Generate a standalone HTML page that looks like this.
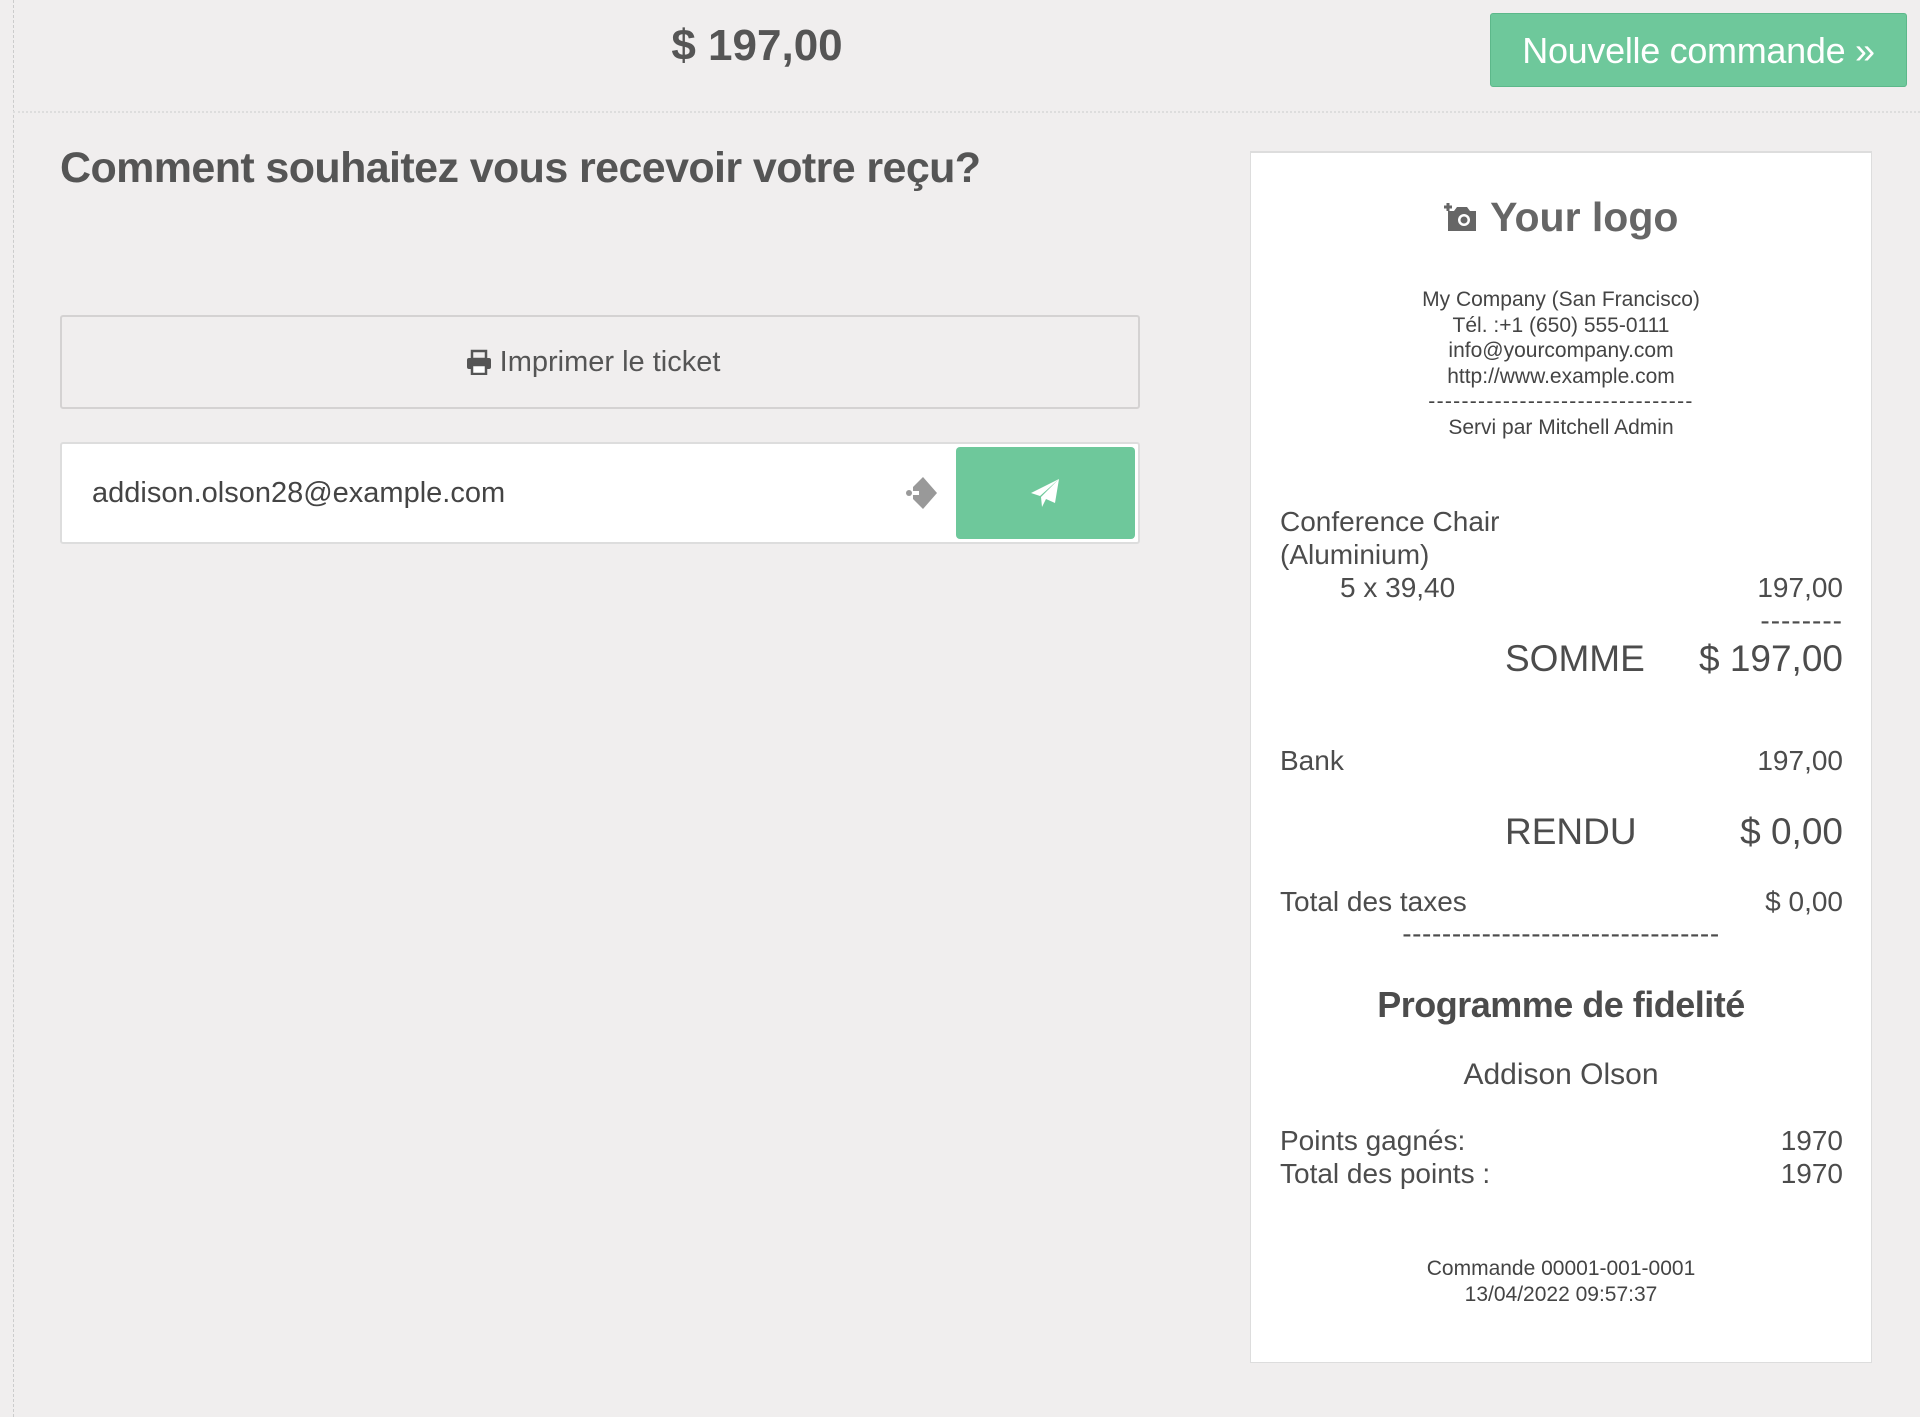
<!DOCTYPE html>
<html><head><meta charset="utf-8"><style>
*{margin:0;padding:0;box-sizing:border-box}
body{width:1920px;height:1417px;background:#f0eeee;font-family:"Liberation Sans",sans-serif;color:#4c4c4c;position:relative;overflow:hidden}
.a{position:absolute;white-space:nowrap}
.r{text-align:right}
.c{text-align:center}
</style></head><body>
<div class="a" style="left:13px;top:0;height:1417px;border-left:1px dashed #ccc"></div>
<div class="a" style="left:13px;top:111px;width:1907px;border-top:2px dotted #ddd"></div>
<div class="a c" style="left:557px;width:400px;top:20px;font-size:44px;line-height:52px;font-weight:bold;color:#555">$ 197,00</div>
<div class="a c" style="left:1490px;top:13px;width:417px;height:74px;background:#6ec89b;border:1px solid #5cb88a;border-radius:3px;color:#fff;font-size:36px;line-height:74px;letter-spacing:-0.3px">Nouvelle commande »</div>
<div class="a" style="left:60px;top:144px;font-size:43px;line-height:48px;font-weight:bold;color:#555;letter-spacing:-0.6px">Comment souhaitez vous recevoir votre reçu?</div>
<div class="a c" style="left:60px;top:315px;width:1080px;height:94px;border:2px solid #d4d2d2;border-radius:3px;background:#f0eeee;font-size:29px;line-height:90px;color:#555;padding-right:14px"><svg width="26" height="26" viewBox="0 0 26 26" style="vertical-align:-4px"><rect x="6" y="2" width="14" height="8" fill="none" stroke="#555" stroke-width="2.5"/><rect x="1" y="9" width="24" height="11" rx="2" fill="#555"/><rect x="6" y="16" width="14" height="9" fill="#fff" stroke="#555" stroke-width="2.5"/></svg> Imprimer le ticket</div>
<div class="a" style="left:60px;top:442px;width:1080px;height:102px;border:2px solid #ddd;border-radius:3px;background:#fff"></div>
<div class="a" style="left:92px;top:475px;font-size:29px;line-height:36px;color:#444">addison.olson28@example.com</div>
<svg class="a" style="left:903px;top:475px" width="36" height="36" viewBox="0 0 36 36"><path d="M20 2 L34 18 L20 34 L10 24 L10 20 L16 20 L16 16 L10 16 L10 12 Z" fill="#999"/><circle cx="6" cy="18" r="3" fill="#999"/></svg>
<div class="a" style="left:956px;top:447px;width:179px;height:92px;background:#6ec89b;border-radius:4px"></div>
<svg class="a" style="left:1029px;top:477px" width="32" height="32" viewBox="0 0 32 32"><path d="M30 2 L2 16 L11 19 Z M30 2 L12 20 L13 30 L17 22 L26 26 Z" fill="#fff"/></svg>
<div class="a" style="left:1250px;top:151px;width:622px;height:1212px;background:#fff;border:1px solid #ddd;border-top:2px solid #ddd"></div>
<div class="a c" style="left:1250px;width:622px;top:192px;font-size:41px;line-height:50px;font-weight:bold;color:#666"><svg width="36" height="32" viewBox="0 0 36 32" style="vertical-align:-2px"><path d="M4 2v8M0 6h8" stroke="#666" stroke-width="3"/><path d="M4 10h6l3-4h10l3 4h6v20H4Z" fill="#666"/><circle cx="20" cy="19" r="6" fill="#fff"/><circle cx="20" cy="19" r="3.5" fill="#666"/></svg> Your logo</div>
<div class="a c" style="left:1250px;width:622px;top:287px;font-size:21px;line-height:25.5px;color:#444">My Company (San Francisco)<br>Tél. :+1 (650) 555-0111<br>info@yourcompany.com<br>http://www.example.com<br><span style="letter-spacing:1.3px">--------------------------------</span><br>Servi par Mitchell Admin</div>
<div class="a" style="left:1280px;top:505px;font-size:28px;line-height:33px">Conference Chair<br>(Aluminium)</div>
<div class="a" style="left:1340px;top:571px;font-size:28px;line-height:33px">5 x 39,40</div>
<div class="a r" style="right:77px;top:571px;font-size:28px;line-height:33px">197,00</div>
<div class="a r" style="right:77px;top:604px;font-size:28px;line-height:33px;letter-spacing:1px">--------</div>
<div class="a" style="left:1505px;top:638px;font-size:37px;line-height:42px">SOMME</div>
<div class="a r" style="right:77px;top:638px;font-size:37px;line-height:42px">$ 197,00</div>
<div class="a" style="left:1280px;top:744px;font-size:28px;line-height:33px">Bank</div>
<div class="a r" style="right:77px;top:744px;font-size:28px;line-height:33px">197,00</div>
<div class="a" style="left:1505px;top:811px;font-size:37px;line-height:42px">RENDU</div>
<div class="a r" style="right:77px;top:811px;font-size:37px;line-height:42px">$ 0,00</div>
<div class="a" style="left:1280px;top:885px;font-size:28px;line-height:33px">Total des taxes</div>
<div class="a r" style="right:77px;top:885px;font-size:28px;line-height:33px">$ 0,00</div>
<div class="a c" style="left:1250px;width:622px;top:919px;font-size:28px;line-height:30px;letter-spacing:0.6px">--------------------------------</div>
<div class="a c" style="left:1250px;width:622px;top:983px;font-size:36px;line-height:44px;font-weight:bold;letter-spacing:-0.5px">Programme de fidelité</div>
<div class="a c" style="left:1250px;width:622px;top:1057px;font-size:30px;line-height:36px">Addison Olson</div>
<div class="a" style="left:1280px;top:1124px;font-size:28px;line-height:33px">Points gagnés:<br>Total des points :</div>
<div class="a r" style="right:77px;top:1124px;font-size:28px;line-height:33px">1970<br>1970</div>
<div class="a c" style="left:1250px;width:622px;top:1256px;font-size:21px;line-height:25.5px;color:#444">Commande 00001-001-0001<br>13/04/2022 09:57:37</div>
</body></html>
